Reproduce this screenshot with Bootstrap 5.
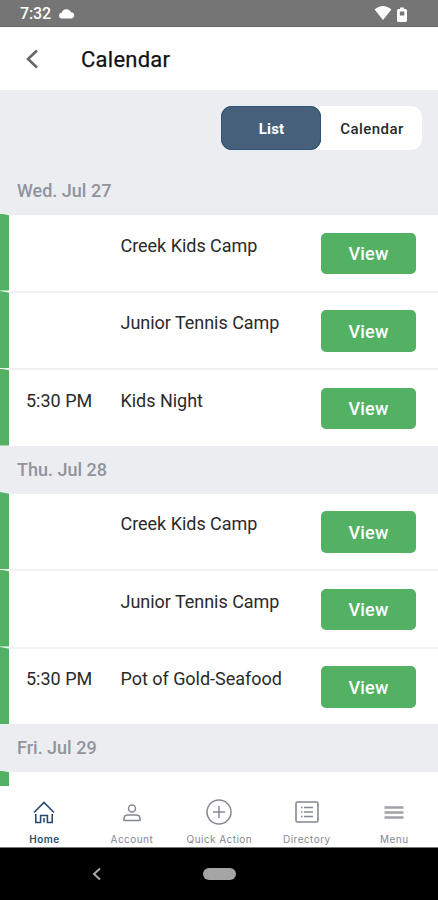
<!DOCTYPE html>
<html lang="en">
<head>
<meta charset="utf-8">
<meta name="viewport" content="width=device-width, initial-scale=1">
<title>Calendar</title>
<link href="https://cdn.jsdelivr.net/npm/bootstrap@5.3.0/dist/css/bootstrap.min.css" rel="stylesheet">
<style>
body{font-family:Roboto,"Liberation Sans",sans-serif;color:#2a2a2a;height:900px}
svg{display:block;flex:none}
.status-bar{height:27px;background:#757575;border-bottom:1px solid #686868;padding:0 30px 0 20px}
.clock{font-size:16px;font-weight:500;line-height:27px;letter-spacing:-.1px;padding-top:1px}
.app-bar{height:63px;padding-left:25px}
.app-title{font-size:22px;font-weight:400;line-height:28px;letter-spacing:.25px;color:#111;margin:2px 0 0 42px;-webkit-text-stroke:.25px #111}
.agenda{background:#ecedf1}
.switch-row{height:77px;padding:16px 16px 0 0}
.switcher{width:201px;height:44px;border-radius:11px;background:#fff}
.switcher .btn{width:100px;border-radius:11px;font-size:15px;font-weight:500;letter-spacing:.45px;padding:3px 0 0 2px;border:0;color:#2a2a2a}
.switcher .btn.active{background:#47617c;box-shadow:inset 0 0 0 1px #2f5578;color:#fff;font-weight:700;letter-spacing:.2px;padding-left:1px}
.day-title{height:48px;padding-left:17px;font-size:18px;font-weight:500;line-height:47px;letter-spacing:0;color:#91949d;margin:0}
.event{height:77.5px;border-bottom:2px solid #f1f1f3;padding:17.5px 22.5px 0 26px;background:#fff}
.event:last-child{height:75.5px;border-bottom:0}
.event::before{content:"";position:absolute;left:0;top:-1.5px;bottom:0;width:9.3px;background:#53b163;clip-path:polygon(0 0,100% 1.8px,100% 100%,0 100%)}
.event-time{width:94.5px;font-size:18px;line-height:25px}
.event-name{font-size:18px;line-height:25px;letter-spacing:-.03px}
.btn-view{width:95px;height:41.5px;border:0;border-radius:5px;background:#53b163;color:#fff;font-size:18px;font-weight:500;padding:1px 0 0 1px;letter-spacing:.2px}
.tab-bar{height:61px;color:#858993;padding-left:.7px}
.tab{width:87.6px;padding-top:11px;font-family:Inter,Roboto,sans-serif;font-size:10px;line-height:12px;font-weight:400;letter-spacing:.45px;color:#858993}
.tab svg{margin-bottom:6px}
.tab.current{color:#274b70;font-weight:600}
.system-nav{height:53px;border-top:1px solid #777}
.back-key{padding-left:92px;width:203px}
.home-pill{width:33px;height:12px;background:#a5a5a5}
</style>
<script src="https://cdn.jsdelivr.net/npm/bootstrap@5.3.0/dist/js/bootstrap.bundle.min.js"></script>
</head>
<body class="d-flex flex-column overflow-hidden bg-white">
<div class="status-bar d-flex align-items-center text-white flex-shrink-0">
  <span class="clock">7:32</span>
  <svg class="ms-2" width="16" height="11" viewBox="0 0 16 11" fill="#fff"><path d="M3 10.500a2.900 2.900 0 0 1-.3-5.800A5 5 0 0 1 12 4.200 3.200 3.200 0 0 1 12.800 10.500Z"/></svg>
  <svg class="ms-auto" width="18" height="16" viewBox="0 0 18 16" fill="#fff"><path d="M9 15 .6 4.500Q4.500 1 9 1t8.400 3.500Z"/></svg>
  <svg class="ms-1 mt-1" width="12" height="16" viewBox="0 0 12 16"><path d="M4 .5h4V2h1.500Q11 2 11 3.500v10Q11 15 9.500 15h-7Q1 15 1 13.500v-10Q1 2 2.500 2H4Z" fill="#fff"/><rect x="3.800" y="4.500" width="4.500" height="4" fill="#757575"/></svg>
</div>
<header class="app-bar d-flex align-items-center flex-shrink-0">
  <svg width="14" height="20" viewBox="0 0 14 20" fill="none" stroke="#666" stroke-width="2.600"><path d="M12 1.500 3 10l9 8.500"/></svg>
  <h1 class="app-title">Calendar</h1>
</header>
<main class="agenda flex-grow-1 overflow-hidden">
  <div class="switch-row d-flex justify-content-end">
    <div class="switcher d-flex"><button class="btn active">List</button><button class="btn">Calendar</button></div>
  </div>
  <h2 class="day-title">Wed. Jul 27</h2>
  <section>
    <div class="event d-flex position-relative"><span class="event-time"></span><span class="event-name">Creek Kids Camp</span><button class="btn btn-view ms-auto">View</button></div>
    <div class="event d-flex position-relative"><span class="event-time"></span><span class="event-name">Junior Tennis Camp</span><button class="btn btn-view ms-auto">View</button></div>
    <div class="event d-flex position-relative"><span class="event-time">5:30 PM</span><span class="event-name">Kids Night</span><button class="btn btn-view ms-auto">View</button></div>
  </section>
  <h2 class="day-title">Thu. Jul 28</h2>
  <section>
    <div class="event d-flex position-relative"><span class="event-time"></span><span class="event-name">Creek Kids Camp</span><button class="btn btn-view ms-auto">View</button></div>
    <div class="event d-flex position-relative"><span class="event-time"></span><span class="event-name">Junior Tennis Camp</span><button class="btn btn-view ms-auto">View</button></div>
    <div class="event d-flex position-relative"><span class="event-time">5:30 PM</span><span class="event-name">Pot of Gold-Seafood</span><button class="btn btn-view ms-auto">View</button></div>
  </section>
  <h2 class="day-title">Fri. Jul 29</h2>
  <section><div class="event position-relative"></div></section>
</main>
<nav class="tab-bar d-flex flex-shrink-0 bg-white">
  <div class="tab current d-flex flex-column align-items-center"><svg width="24" height="30" viewBox="0 0 24 30" fill="none" stroke="#274b70" stroke-width="1.600"><path d="M2 15.500 12 5.500l10 10M3.800 17v8.500h4.800v-7h6.800v7h4.800V17M12 21v4.500"/></svg>Home</div>
  <div class="tab d-flex flex-column align-items-center"><svg width="24" height="30" viewBox="0 0 24 30" fill="none" stroke="#858993" stroke-width="1.500"><circle cx="12" cy="11.500" r="3.500"/><path d="M4 23.500v-2Q4 18 8 18h8q4 0 4 3.500v2Z"/></svg>Account</div>
  <div class="tab d-flex flex-column align-items-center"><svg width="26" height="30" viewBox="0 0 26 30" fill="none" stroke="#858993" stroke-width="1.500"><circle cx="13" cy="15" r="12"/><path d="M13 9v12M7 15h12"/></svg>Quick Action</div>
  <div class="tab d-flex flex-column align-items-center"><svg width="24" height="30" viewBox="0 0 24 30" fill="none" stroke="#858993" stroke-width="1.600"><rect x="1" y="5" width="22" height="20" rx="1.500"/><path d="M6 10.500h1.500M9 10.500h9M6 15h1.500M9 15h9M6 19.500h1.500M9 19.500h9"/></svg>Directory</div>
  <div class="tab d-flex flex-column align-items-center"><svg width="20" height="30" viewBox="0 0 20 30" stroke="#a0a2a8" stroke-width="2.400"><path d="M.5 10.500h19M.5 15.500h19M.5 20.500h19"/></svg>Menu</div>
</nav>
<footer class="system-nav d-flex bg-black align-items-center flex-shrink-0">
  <div class="back-key"><svg width="10" height="14" viewBox="0 0 10 14" fill="none" stroke="#aaa" stroke-width="2"><path d="M8 1.500 2 7l6 5.500"/></svg></div>
  <div class="home-pill rounded-pill"></div>
</footer>
</body>
</html>
